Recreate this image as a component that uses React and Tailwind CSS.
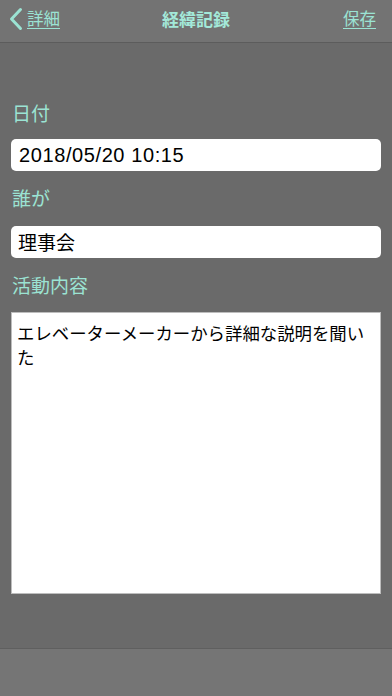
export default function App() {
  const jp = { fontFamily: '"Noto Sans CJK JP", "Noto Sans", sans-serif' };
  return (
    <div className="w-[392px] h-[696px] flex flex-col bg-[#6a6a6a] overflow-hidden" style={jp}>
      <div className="h-[43px] bg-[#737373] border-b border-[#5c5c5c] shrink-0">
        <div className="relative h-[37px] flex items-center pl-[8px] pr-[10px]">
          <div className="flex items-center text-[#9be3d3]">
            <svg width="15" height="24" viewBox="0 0 15 24" className="mr-[4px]">
              <path d="M12.5 2.5 L3.5 12 L12.5 21.5" fill="none" stroke="#9be3d3" strokeWidth="3" strokeLinecap="round" strokeLinejoin="round" />
            </svg>
            <span className="text-[16.5px] leading-none underline underline-offset-[3px] decoration-1">詳細</span>
          </div>
          <div className="absolute left-0 right-0 text-center text-[17px] font-bold text-[#a3e9d9] pointer-events-none">経緯記録</div>
          <div className="ml-auto mr-[6px] text-[16.5px] leading-none text-[#9be3d3] underline underline-offset-[3px] decoration-1">保存</div>
        </div>
      </div>
      <div className="flex-1 flex flex-col px-[11px] pt-[58px]">
        <div className="h-[24px] leading-[24px] text-[19px] text-[#9be3d3] pl-[1px]">日付</div>
        <div className="mt-[14px] h-[32px] bg-white rounded-[5px] flex items-center pl-[8px] text-[20px] text-black tracking-[0.6px]" style={{ fontFamily: '"Liberation Sans", "Noto Sans CJK JP", sans-serif' }}>
          2018/05/20 10:15
        </div>
        <div className="mt-[15px] h-[24px] leading-[24px] text-[19px] text-[#9be3d3] pl-[1px]">誰が</div>
        <div className="mt-[16px] h-[32px] bg-white rounded-[5px] flex items-center pl-[7px] text-[19px] text-black">
          理事会
        </div>
        <div className="mt-[15px] h-[24px] leading-[24px] text-[19px] text-[#9be3d3] pl-[1px]">活動内容</div>
        <div className="mt-[15px] h-[282px] bg-white border border-[#bdbdbd] px-[5px] pt-[8px] text-[17.4px] leading-[24px] text-black">
          エレベーターメーカーから詳細な説明を聞いた
        </div>
      </div>
      <div className="h-[48px] shrink-0 bg-[#757575] border-t border-[#5f5f5f]" />
    </div>
  );
}
